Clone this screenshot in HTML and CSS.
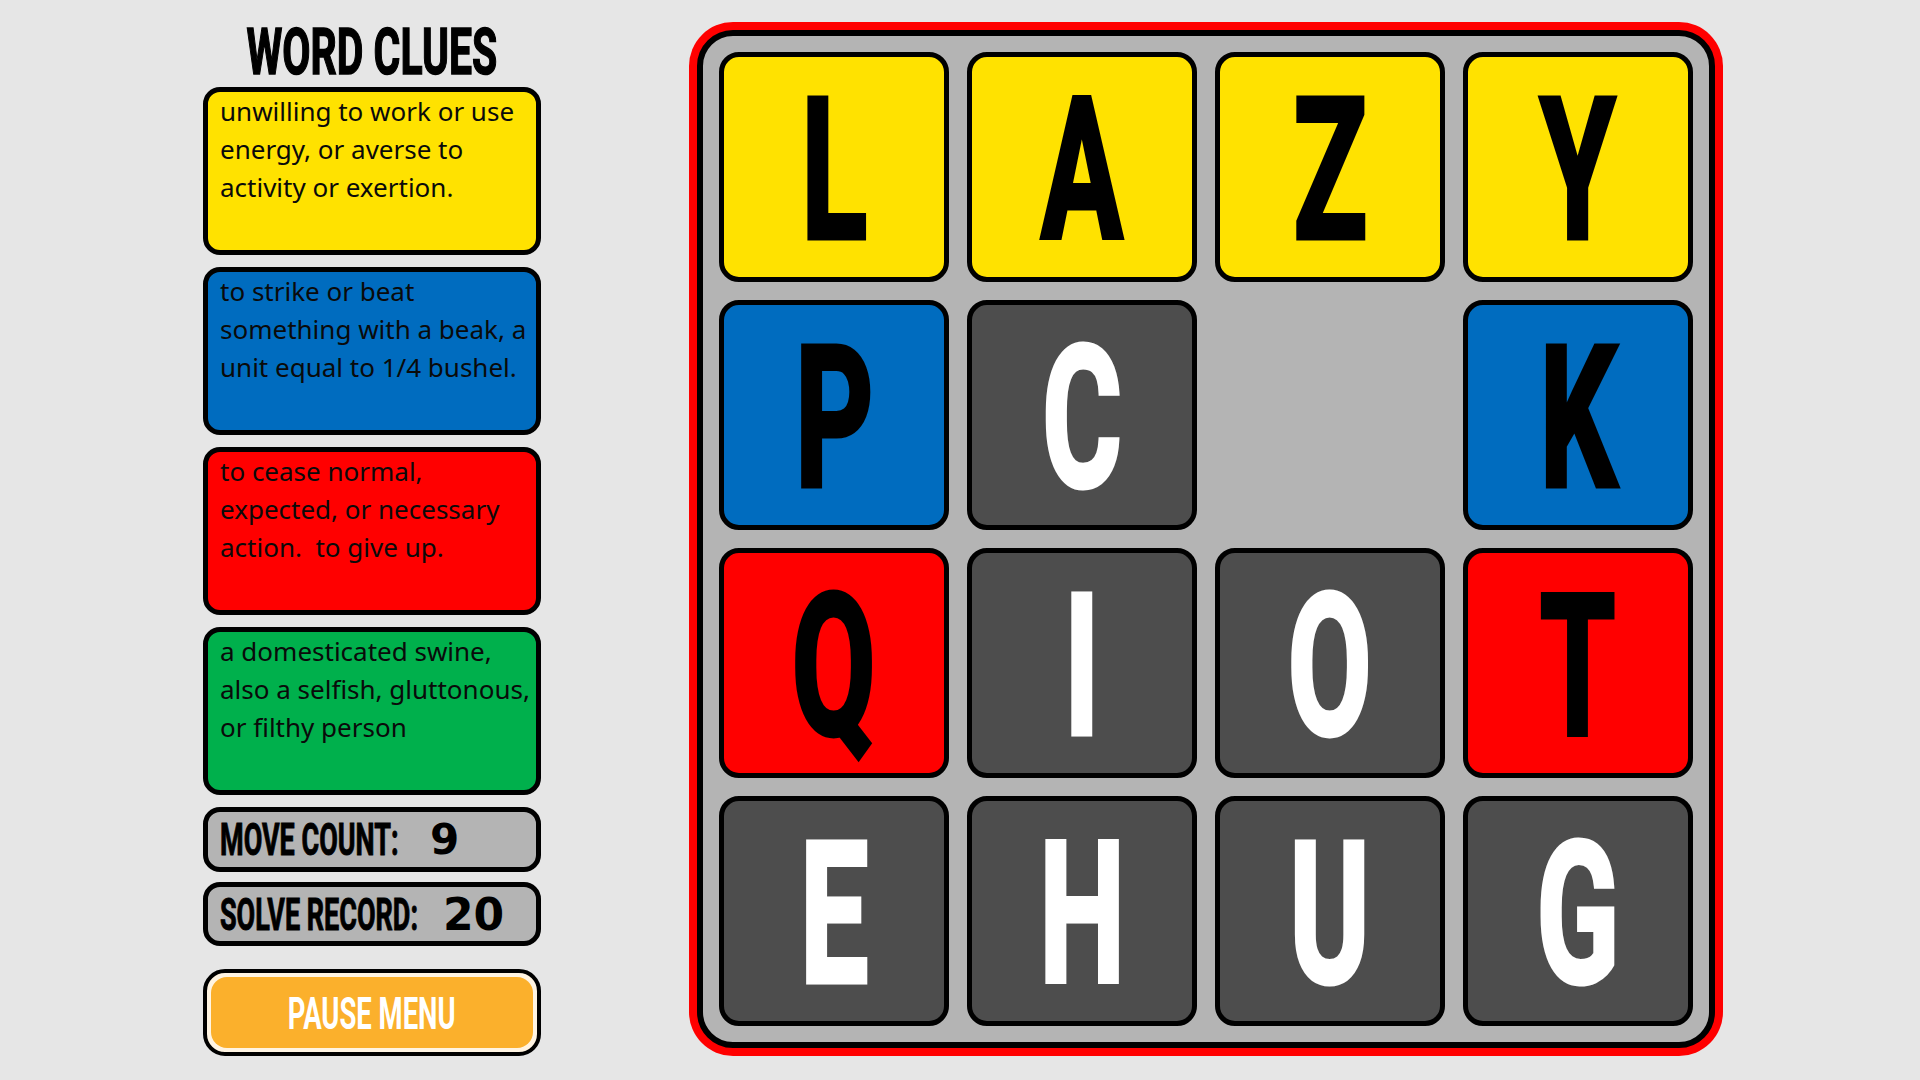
FILE: index.html
```html
<!DOCTYPE html>
<html lang="en">
<head>
<meta charset="utf-8">
<title>Word Clues</title>
<link rel="stylesheet" href="styles.css">
</head>
<body>
<div class="page">
  <aside class="side">
    <h1 class="title"><span class="title-text">WORD CLUES</span></h1>
    <div class="clue clue-yellow">unwilling to work or use<br>energy, or averse to<br>activity or exertion.</div>
    <div class="clue clue-blue">to strike or beat<br>something with a beak, a<br>unit equal to 1/4 bushel.</div>
    <div class="clue clue-red">to cease normal,<br>expected, or necessary<br>action.&nbsp; to give up.</div>
    <div class="clue clue-green">a domesticated swine,<br>also a selfish, gluttonous,<br>or filthy person</div>
    <div class="stat stat-move"><span class="stat-label label-move"><span class="squeeze-left">MOVE COUNT:</span></span><span class="stat-value">9</span></div>
    <div class="stat stat-record"><span class="stat-label label-record"><span class="squeeze-left">SOLVE RECORD:</span></span><span class="stat-value value-record">20</span></div>
    <button class="pause"><span class="pause-inner"><span class="pause-text">PAUSE MENU</span></span></button>
  </aside>
  <main class="board">
    <div class="board-inner">
      <div class="tile yellow"><span class="glyph">L</span></div>
      <div class="tile yellow"><span class="glyph">A</span></div>
      <div class="tile yellow"><span class="glyph">Z</span></div>
      <div class="tile yellow"><span class="glyph">Y</span></div>
      <div class="tile blue"><span class="glyph">P</span></div>
      <div class="tile dark"><span class="glyph">C</span></div>
      <div class="tile empty"></div>
      <div class="tile blue"><span class="glyph">K</span></div>
      <div class="tile red"><span class="glyph">Q</span></div>
      <div class="tile dark"><span class="glyph">I</span></div>
      <div class="tile dark"><span class="glyph">O</span></div>
      <div class="tile red"><span class="glyph">T</span></div>
      <div class="tile dark"><span class="glyph">E</span></div>
      <div class="tile dark"><span class="glyph">H</span></div>
      <div class="tile dark"><span class="glyph">U</span></div>
      <div class="tile dark"><span class="glyph">G</span></div>
    </div>
  </main>
</div>
</body>
</html>
```
FILE: styles.css
```css
* { box-sizing: border-box; }
html, body { margin: 0; padding: 0; }
body {
  width: 1920px;
  height: 1080px;
  background: #e6e6e6;
  overflow: hidden;
  font-family: "Noto Sans", "Open Sans", sans-serif;
}
.page {
  display: flex;
  align-items: flex-start;
  padding: 22px 0 0 203px;
  gap: 148px;
}
.side {
  width: 338px;
  display: flex;
  flex-direction: column;
}
.title {
  margin: 0;
  height: 65px;
  display: flex;
  justify-content: center;
  font-family: Roboto, "Liberation Sans", sans-serif;
  font-weight: 700;
  font-size: 64px;
  line-height: 65px;
  color: #000;
  white-space: nowrap;
}
.title-text {
  display: inline-block;
  flex: none;
  transform: translateY(-2px) scaleX(0.64);
  -webkit-text-stroke: 1.5px #000;
}
.clue {
  height: 168px;
  margin-bottom: 12px;
  border: 5px solid #000;
  border-radius: 17px;
  padding: 0 0 0 12px;
  font-size: 26px;
  line-height: 38px;
  color: #0a0a0a;
  white-space: nowrap;
}
.clue-yellow { background: #ffe200; }
.clue-blue { background: #006cbf; }
.clue-red { background: #ff0000; }
.clue-green { background: #00b04c; }
.stat {
  height: 65px;
  border: 5px solid #000;
  border-radius: 17px;
  background: #b4b4b4;
  display: flex;
  align-items: center;
  padding-left: 12px;
}
.stat-record { height: 64px; margin-top: 10px; }
.stat-label {
  font-family: Roboto, "Liberation Sans", sans-serif;
  font-weight: 700;
  font-size: 45px;
  color: #000;
  white-space: nowrap;
}
.label-move { width: 210px; }
.label-record { width: 223px; }
.squeeze-left {
  display: inline-block;
  transform-origin: left center;
  transform: scaleX(0.6);
  -webkit-text-stroke: 1px #000;
}
.stat-value {
  font-family: "DejaVu Sans", sans-serif;
  font-weight: bold;
  font-size: 42px;
  color: #000;
}
.value-record { font-size: 44px; }
.pause {
  margin-top: 23px;
  height: 87px;
  padding: 0;
  border: 4px solid #000;
  border-radius: 22px;
  background: #fff4e2;
  display: flex;
  cursor: pointer;
}
.pause-inner {
  flex: 1;
  margin: 4px;
  border-radius: 16px;
  background: #fbb02c;
  color: #fff;
  display: flex;
  align-items: center;
  justify-content: center;
  font-family: Roboto, "Liberation Sans", sans-serif;
  font-weight: 700;
  font-size: 45px;
  white-space: nowrap;
}
.pause-text {
  display: inline-block;
  flex: none;
  transform: translateY(1px) scaleX(0.61);
}
.board {
  background: #ff0000;
  padding: 8px;
  border-radius: 44px;
}
.board-inner {
  border: 6px solid #000;
  border-radius: 36px;
  background: #b4b4b4;
  padding: 16px;
  display: grid;
  grid-template-columns: repeat(4, 230px);
  grid-auto-rows: 230px;
  gap: 18px;
}
.tile {
  border: 5px solid #000;
  border-radius: 20px;
  display: flex;
  align-items: center;
  justify-content: center;
  font-family: Roboto, "Liberation Sans", sans-serif;
  font-weight: 700;
  font-size: 196px;
  line-height: 1;
  color: #000;
}
.glyph {
  display: inline-block;
  transform: translateY(4px) scaleX(0.62);
  -webkit-text-stroke: 5px currentColor;
}
.tile.yellow { background: #ffe200; }
.tile.blue { background: #006cbf; }
.tile.red { background: #ff0000; }
.tile.dark { background: #4d4d4d; color: #fff; }
.tile.empty { border: none; background: transparent; }
```
